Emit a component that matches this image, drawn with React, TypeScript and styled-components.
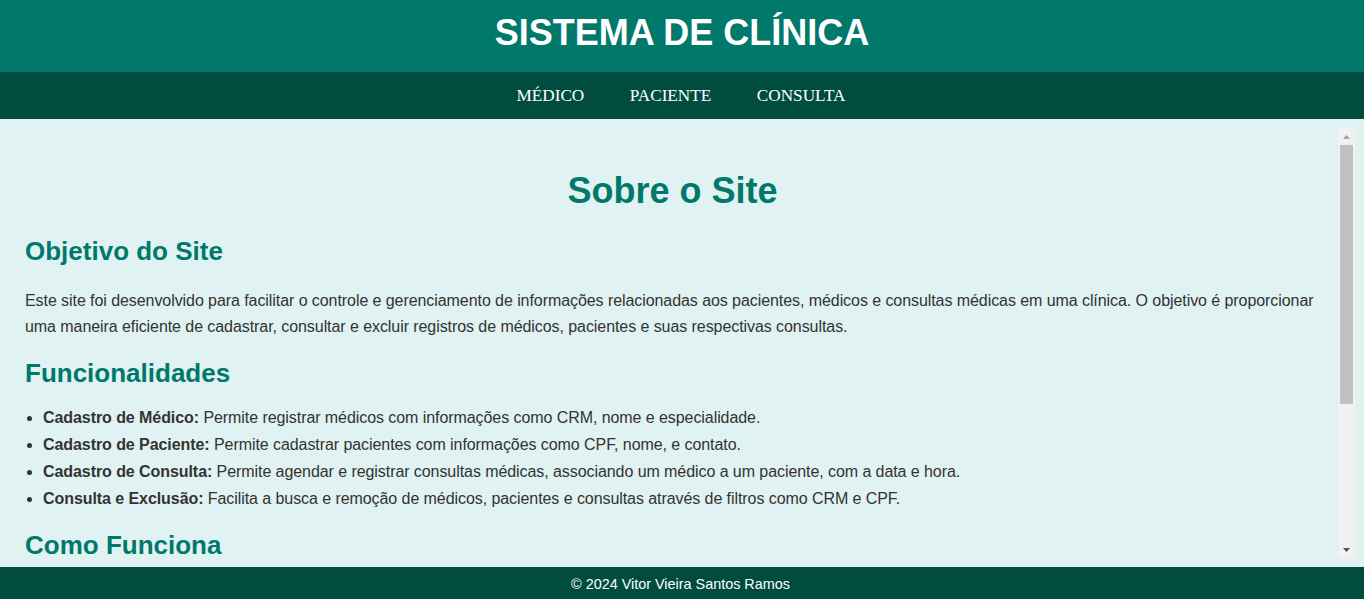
import React from "react";
import styled, { createGlobalStyle } from "styled-components";

const GlobalStyle = createGlobalStyle`
  html, body {
    margin: 0;
    padding: 0;
    height: 100%;
  }
  body {
    font-family: "Liberation Sans", Arial, sans-serif;
    background: #e0f2f1;
    color: #333;
  }
  #root { height: 100%; }
`;

const Page = styled.div`
  display: flex;
  flex-direction: column;
  height: 100vh;
`;

const Header = styled.header`
  background: #00796b;
  height: 72px;
  display: flex;
  align-items: center;
  justify-content: center;
`;

const SiteTitle = styled.h1`
  margin: 0;
  color: #fff;
  font-size: 36px;
  font-weight: bold;
  line-height: 42px;
  padding-bottom: 6px;
`;

const Nav = styled.nav`
  background: #004d40;
  height: 47px;
  display: flex;
  align-items: center;
  justify-content: center;
  gap: 45.5px;
  padding-right: 2px;
`;

const NavLink = styled.a`
  font-family: "Liberation Serif", "Times New Roman", serif;
  font-size: 17.2px;
  color: #fff;
  text-decoration: none;
  text-transform: uppercase;
`;

const Main = styled.main`
  flex: 1;
  min-height: 0;
  display: flex;
  padding: 9px;
`;

const Scroll = styled.div`
  flex: 1;
  min-width: 0;
  overflow: hidden;
  padding: 42px 18px 0 16px;
`;

const ScrollTrack = styled.div`
  width: 17px;
  background: #f1f1f1;
  display: flex;
  flex-direction: column;
`;

const ScrollButton = styled.div`
  height: 17px;
  display: flex;
  align-items: center;
  justify-content: center;
  flex-shrink: 0;
`;

const ScrollThumb = styled.div`
  height: 259px;
  margin: 0 2px;
  background: #c1c1c1;
`;

const ScrollSpacer = styled.div`
  flex: 1;
`;

const PageTitle = styled.h1`
  text-align: center;
  color: #00796b;
  font-size: 36px;
  margin: 0 0 24px;
`;

const SectionTitle = styled.h2`
  color: #00796b;
  font-size: 26px;
  margin: 18px 0 15px;
`;

const Paragraph = styled.p`
  font-size: 16px;
  line-height: 26px;
  letter-spacing: -0.07px;
  margin: 21px 0 16px;
`;

const List = styled.ul`
  margin: 0 0 17px;
  padding-left: 18px;
`;

const Item = styled.li`
  font-size: 16px;
  line-height: 27px;
  letter-spacing: -0.07px;
`;

const Footer = styled.footer`
  background: #004d40;
  color: #fff;
  height: 32px;
  display: flex;
  align-items: center;
  justify-content: center;
  font-size: 14.4px;
  line-height: 17px;
  padding: 2px 3px 0 0;
  box-sizing: border-box;
`;

const features = [
  ["Cadastro de Médico:", "Permite registrar médicos com informações como CRM, nome e especialidade."],
  ["Cadastro de Paciente:", "Permite cadastrar pacientes com informações como CPF, nome, e contato."],
  ["Cadastro de Consulta:", "Permite agendar e registrar consultas médicas, associando um médico a um paciente, com a data e hora."],
  ["Consulta e Exclusão:", "Facilita a busca e remoção de médicos, pacientes e consultas através de filtros como CRM e CPF."],
];

const Arrow = ({ up, color }: { up?: boolean; color: string }) => (
  <svg width="7" height="4" viewBox="0 0 7 4">
    {up ? (
      <polygon points="3.5,0 7,4 0,4" fill={color} />
    ) : (
      <polygon points="0,0 7,0 3.5,4" fill={color} />
    )}
  </svg>
);

export default function App() {
  return (
    <>
      <GlobalStyle />
      <Page>
        <Header>
          <SiteTitle>SISTEMA DE CLÍNICA</SiteTitle>
        </Header>
        <Nav>
          <NavLink href="#">Médico</NavLink>
          <NavLink href="#">Paciente</NavLink>
          <NavLink href="#">Consulta</NavLink>
        </Nav>
        <Main>
          <Scroll>
            <PageTitle>Sobre o Site</PageTitle>
            <SectionTitle>Objetivo do Site</SectionTitle>
            <Paragraph>
              Este site foi desenvolvido para facilitar o controle e gerenciamento de informações relacionadas aos pacientes, médicos e consultas médicas em uma clínica. O objetivo é proporcionar uma maneira eficiente de cadastrar, consultar e excluir registros de médicos, pacientes e suas respectivas consultas.
            </Paragraph>
            <SectionTitle>Funcionalidades</SectionTitle>
            <List>
              {features.map(([b, t]) => (
                <Item key={b}>
                  <strong>{b}</strong> {t}
                </Item>
              ))}
            </List>
            <SectionTitle>Como Funciona</SectionTitle>
          </Scroll>
          <ScrollTrack aria-hidden="true">
            <ScrollButton>
              <Arrow up color="#a3a3a3" />
            </ScrollButton>
            <ScrollThumb />
            <ScrollSpacer />
            <ScrollButton>
              <Arrow color="#505050" />
            </ScrollButton>
          </ScrollTrack>
        </Main>
        <Footer>© 2024 Vitor Vieira Santos Ramos</Footer>
      </Page>
    </>
  );
}
